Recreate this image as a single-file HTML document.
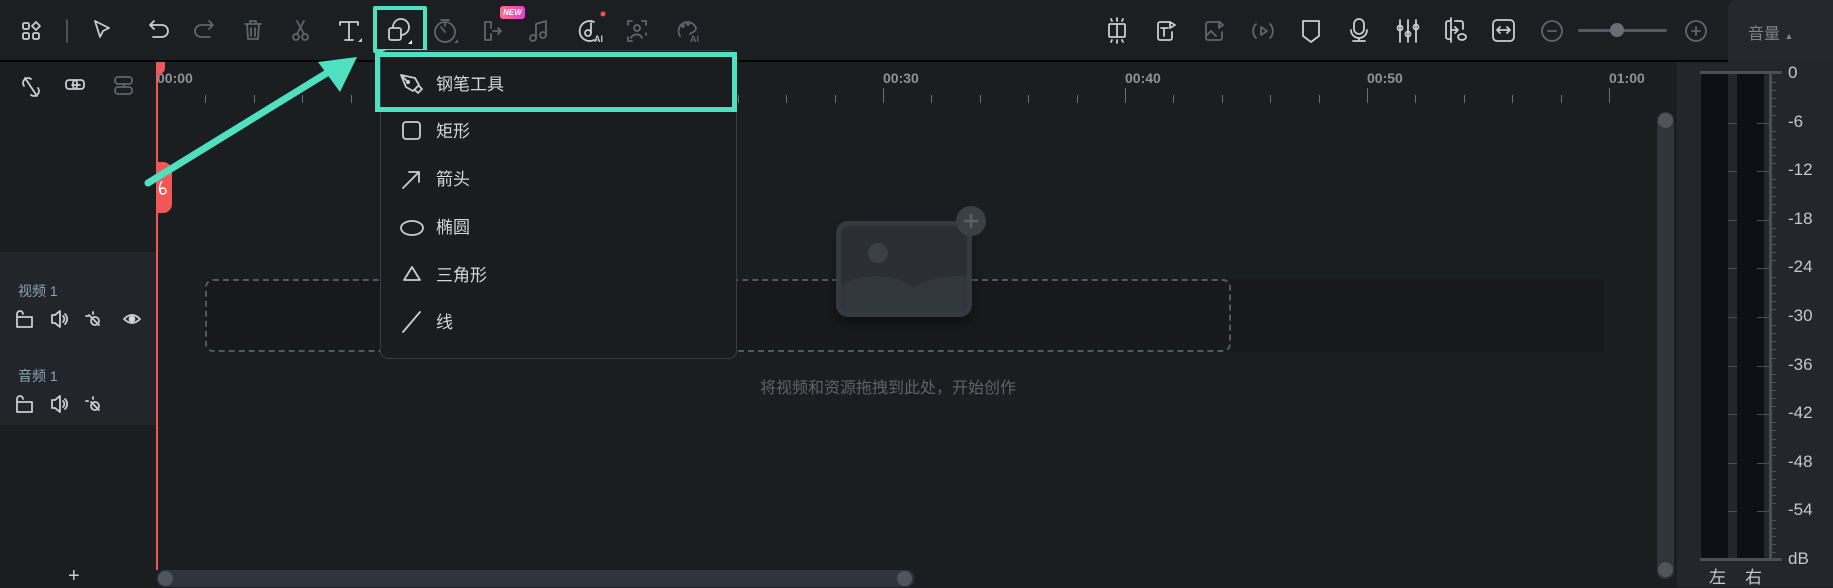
<!DOCTYPE html>
<html><head><meta charset="utf-8"><style>
*{margin:0;padding:0;box-sizing:border-box}
body{width:1833px;height:587px;background:#1b1e21;position:relative;overflow:hidden;font-family:"Liberation Sans","Noto Sans CJK SC",sans-serif}
.a{position:absolute}
svg.i{position:absolute;overflow:visible}
.ic{fill:none;stroke:#c9cdd1;stroke-width:1.8;stroke-linecap:round;stroke-linejoin:round}
.dim{stroke:#5f656b}
.lbl{position:absolute;color:#8d9298;font-size:14px;font-weight:bold}
.tk{position:absolute;background:#6a6f75;width:1px}
.mi{position:absolute;left:436px;color:#d3d7db;font-size:17px;line-height:20px}
.db{position:absolute;left:1788px;color:#c4c8cc;font-size:17px;line-height:18px}
</style></head><body>
<div class="a" style="left:0;top:0;width:1833px;height:60px;background:#1c1f22"></div>
<div class="a" style="left:0;top:60px;width:1728px;height:2px;background:#050505"></div>
<div class="a" style="left:1728px;top:0;width:105px;height:62px;background:#24282c;border-top-left-radius:8px"></div>
<div class="a" style="left:1748px;top:20px;color:#7e838a;font-size:16px">音量 <span style="font-size:9px">▲</span></div>

<svg class="i" width="1833" height="60" style="left:0;top:0">
 <g class="ic">
  <rect x="23" y="23" width="6" height="6" rx="1.5"/><rect x="33" y="33" width="6" height="6" rx="1.5"/><rect x="23" y="33" width="6" height="6" rx="1.5"/><path d="M36 22l4 4-4 4-4-4z"/>
  <path d="M67 20v22" stroke="#555"/>
  <path d="M95 21l5 16 3-6 6-3z"/>
  <path d="M150 25h12a6 6 0 010 12h-9M150 25l4-4M150 25l4 4"/>
 </g>
 <g class="ic dim">
  <path d="M213 25h-12a6 6 0 000 12h9M213 25l-4-4M213 25l-4 4"/>
  <path d="M245 24h16M250 24v-3h6v3M247 24l1 15h10l1-15M251 28v8M255 28v8"/>
  <circle cx="296" cy="37" r="3"/><circle cx="305" cy="37" r="3"/><path d="M297 34l7-13M304 34l-7-13"/>
 </g>
 <g class="ic"><path d="M340 22h18M349 22v18M345 40h8M340 22v3M358 22v3"/></g>
 <path d="M358 42l4-4v4z" fill="#c9cdd1"/>
 <g class="ic"><rect x="389" y="28" width="12" height="12" rx="2"/><path d="M401 35a8 8 0 10-8-8"/></g>
 <path d="M408 44l4-4v4z" fill="#fff"/>
 <g class="ic dim">
  <circle cx="445" cy="32" r="10"/><path d="M445 22v4M445 32l-4-5M441 20h8"/>
  <path d="M485 22v18M485 22h6v6M485 40h6v-6M493 31h8M498 28l3 3-3 3"/>
  <path d="M536 24l10-3v14M536 24v14"/><circle cx="533" cy="38" r="3"/><circle cx="543" cy="35" r="3"/>
 </g>
 <path d="M454 43l4-4v4z" fill="#5f656b"/>
 <g class="ic"><path d="M594 22a10 10 0 100 18"/><circle cx="588" cy="33" r="3"/><path d="M591 33v-10"/></g>
 <text x="594" y="42" fill="#c9cdd1" font-size="9" font-weight="bold" font-family="Liberation Sans">AI</text>
 <circle cx="603" cy="14" r="2.5" fill="#f24e4e"/>
 <g class="ic dim"><path d="M628 25v-4h4M642 21h4v4M628 37v4h4M646 33v2"/><circle cx="637" cy="28" r="3"/><path d="M631 38a6 6 0 0111 0"/>
  <path d="M680 36a9 9 0 1116-8c0 4-4 4-6 6"/><circle cx="683" cy="26" r="1"/><circle cx="688" cy="24" r="1"/></g>
 <text x="690" y="42" fill="#5f656b" font-size="9" font-weight="bold" font-family="Liberation Sans">AI</text>
 <g class="ic" stroke="#4fd9b8"><rect x="1109" y="24" width="16" height="13" rx="1"/><path d="M1117 24v13M1117 18v3M1117 40v3M1111 19l1 2M1123 19l-1 2M1111 42l1-2M1123 42l-1-2"/></g>
 <g class="ic"><path d="M1170 22h-10a2 2 0 00-2 2v14a2 2 0 002 2h10a2 2 0 002-2v-6M1161 28h7M1164 28v8M1170 22l5 3-5 3z"/></g>
 <g class="ic dim"><path d="M1220 22h-12a2 2 0 00-2 2v14a2 2 0 002 2h12a2 2 0 002-2v-6M1206 36l5-5 5 5"/><path d="M1219 22l4 3-4 3z"/>
  <path d="M1256 24a10 10 0 000 14M1270 38a10 10 0 000-14M1261 27l6 4-6 4z"/></g>
 <g class="ic"><path d="M1303 21h16v15l-8 6-8-6z"/>
  <rect x="1354" y="19" width="10" height="15" rx="5"/><path d="M1351 30a8 8 0 0016 0M1359 38v3M1353 41h12"/>
  <path d="M1400 20v22M1408 20v22M1416 20v22"/><circle cx="1400" cy="28" r="2.5"/><circle cx="1408" cy="34" r="2.5"/><circle cx="1416" cy="27" r="2.5"/>
  <path d="M1451 21h-3a2 2 0 00-2 2v14a2 2 0 002 2h3M1451 18v24M1455 21h6a2 2 0 012 2v6M1451 30h6M1455 27l3 3-3 3"/><ellipse cx="1462" cy="37" rx="4" ry="3"/>
  <rect x="1493" y="20" width="21" height="21" rx="4"/><path d="M1497 30h13M1497 30l3-3M1497 30l3 3M1510 30l-3-3M1510 30l-3 3"/></g>
 <g class="ic dim"><circle cx="1552" cy="31" r="10"/><path d="M1548 31h8"/><circle cx="1696" cy="31" r="10"/><path d="M1692 31h8M1696 27v8"/></g>
 <rect x="1578" y="29" width="89" height="3" rx="1.5" fill="#55595f"/>
 <circle cx="1617" cy="30" r="7" fill="#6a6f75"/>
</svg>
<div class="a" style="left:500px;top:6px;width:25px;height:13px;border-radius:3px;background:linear-gradient(90deg,#ff6d8a,#e23fd0);color:#fff;font-size:8px;font-weight:bold;font-style:italic;text-align:center;line-height:13px">NEW</div>
<div class="a" style="left:373px;top:6px;width:54px;height:47px;border:4px solid #4fe0c0;border-radius:2px"></div>

<svg class="i" width="157" height="30" style="left:0;top:70px">
 <g class="ic"><path d="M25 8l12 18M24 16a5 5 0 017-7M38 18a5 5 0 01-7 7"/>
 <rect x="66" y="10" width="11" height="9" rx="3"/><rect x="73" y="10" width="11" height="9" rx="3"/><path d="M72 15h8"/></g>
 <g class="ic dim"><rect x="115" y="7" width="17" height="7" rx="3"/><rect x="115" y="17" width="17" height="7" rx="3"/><path d="M124 14v3"/></g>
</svg>
<div class="a" style="left:0;top:252px;width:157px;height:105px;background:#222529"></div>
<div class="a" style="left:0;top:357px;width:157px;height:68px;background:#222529"></div>
<div class="a" style="left:18px;top:281px;color:#8ea3b8;font-size:14px">视频 1</div>
<div class="a" style="left:18px;top:366px;color:#8ea3b8;font-size:14px">音频 1</div>
<svg class="i" width="157" height="120" style="left:0;top:300px">
 <g class="ic" stroke-width="1.5" stroke="#e0e3e6">
  <path d="M17 19v-5a3 3 0 016 0M17 17h15v10H17z"/><path d="M52 15h3l5-4v16l-5-4h-3zM63 16a4 4 0 010 6M65 14a7 7 0 010 10"/>
  <path d="M91 17l8 8M89 15l2 2M93 12v2M86 16h2"/><circle cx="95" cy="21" r="4"/>
  <path d="M124 19q8-8 16 0q-8 8-16 0z"/><circle cx="132" cy="19" r="2.5" fill="#e0e3e6"/>
  <path d="M17 104v-5a3 3 0 016 0M17 102h15v10H17z"/><path d="M52 100h3l5-4v16l-5-4h-3zM63 101a4 4 0 010 6M65 99a7 7 0 010 10"/>
  <path d="M91 102l8 8M93 97v2M86 101h2"/><circle cx="95" cy="106" r="4"/>
 </g>
</svg>
<div class="a" style="left:68px;top:566px;color:#ccc;font-size:20px;line-height:20px">+</div>

<div class="lbl" style="left:157px;top:70px">00:00</div>
<div class="lbl" style="left:883px;top:70px">00:30</div>
<div class="lbl" style="left:1125px;top:70px">00:40</div>
<div class="lbl" style="left:1367px;top:70px">00:50</div>
<div class="lbl" style="left:1609px;top:70px">01:00</div>
<div id="ticks"></div>

<div class="a" style="left:204px;top:279px;width:1400px;height:73px;background:#17191c;border-radius:4px"></div>
<div class="a" style="left:205px;top:279px;width:1026px;height:73px;border:2px dashed #53585e;border-radius:8px"></div>
<div class="a" style="left:836px;top:221px;width:136px;height:96px;background:#2b2f34;border:5px solid #353a40;border-radius:12px;box-shadow:0 6px 10px rgba(0,0,0,.4);overflow:hidden">
 <div class="a" style="left:27px;top:17px;width:20px;height:20px;border-radius:50%;background:#3b4047"></div>
 <div class="a" style="left:-20px;top:50px;width:110px;height:80px;border-radius:50%;background:#32373d"></div>
 <div class="a" style="left:50px;top:50px;width:130px;height:90px;border-radius:50%;background:#32373d"></div>
</div>
<svg class="i" width="32" height="32" style="left:955px;top:205px"><circle cx="16" cy="16" r="15" fill="#3b4047"/><path d="M16 9v14M9 16h14" stroke="#5a6067" stroke-width="2.5"/></svg>
<div class="a" style="left:760px;top:374px;color:#5e6369;font-size:16px">将视频和资源拖拽到此处，开始创作</div>

<div class="a" style="left:157px;top:570px;width:757px;height:17px;background:#30353b;border-radius:8px"></div>
<div class="a" style="left:158px;top:571px;width:15px;height:15px;background:#4f555c;border-radius:50%"></div>
<div class="a" style="left:897px;top:571px;width:15px;height:15px;background:#4f555c;border-radius:50%"></div>
<div class="a" style="left:1657px;top:112px;width:17px;height:467px;background:#30353b;border-radius:8px"></div>
<div class="a" style="left:1658px;top:113px;width:15px;height:15px;background:#4f555c;border-radius:50%"></div>
<div class="a" style="left:1658px;top:562px;width:15px;height:15px;background:#4f555c;border-radius:50%"></div>

<div class="a" style="left:1677px;top:62px;width:156px;height:525px;background:#23272c"></div>
<div class="a" style="left:1701px;top:74px;width:27px;height:485px;background:#0d1116"></div>
<div class="a" style="left:1737px;top:74px;width:27px;height:485px;background:#0d1116"></div>
<div class="a" style="left:1700px;top:71px;width:82px;height:3px;background:#4a4f55"></div>
<div class="a" style="left:1700px;top:558px;width:82px;height:3px;background:#4a4f55"></div>
<div class="a" style="left:1769px;top:72px;width:3px;height:488px;background:#4a4f55"></div>
<div id="db"></div>
<div class="a" style="left:1709px;top:563px;color:#c4c8cc;font-size:17px">左</div>
<div class="a" style="left:1745px;top:563px;color:#c4c8cc;font-size:17px">右</div>

<div class="a" style="left:156px;top:62px;width:2px;height:508px;background:#f25757"></div>
<div class="a" style="left:156px;top:62px;width:9px;height:12px;background:#f25757;border-radius:0 0 6px 0"></div>
<div class="a" style="left:156px;top:162px;width:16px;height:51px;background:#f25757;border-radius:0 9px 9px 0"></div>
<svg class="i" width="20" height="30" style="left:156px;top:178px"><path d="M6 3c-4 6-3 13 1 13s4-6 0-6-3 3-2 4" fill="none" stroke="#fff" stroke-width="1.4"/></svg>

<div class="a" style="left:380px;top:50px;width:357px;height:309px;background:#1a1d20;border:1px solid #3a3f45;border-radius:8px"></div>
<div class="a" style="left:375px;top:52px;width:362px;height:60px;border:5px solid #4fe0c0"></div>
<svg class="i" width="40" height="260" style="left:396px;top:70px">
 <g class="ic" stroke="#c6cacf" stroke-width="1.6">
  <path d="M5 5l14 3 4 7-6 6-7-4zM5 5l7 7M19 20l3 3 4-4-3-3"/><circle cx="12" cy="12" r="1.2"/>
  <rect x="7" y="52" width="17" height="17" rx="3"/>
  <path d="M7 118l16-16M13 102h10v10"/>
  <ellipse cx="16" cy="158" rx="11" ry="7"/>
  <path d="M16 197l-8 13h16z"/>
  <path d="M7 262l17-20"/>
 </g>
</svg>
<div class="mi" style="top:75px">钢笔工具</div>
<div class="mi" style="top:122px">矩形</div>
<div class="mi" style="top:170px">箭头</div>
<div class="mi" style="top:218px">椭圆</div>
<div class="mi" style="top:266px">三角形</div>
<div class="mi" style="top:313px">线</div>

<svg class="i" width="1833" height="587" style="left:0;top:0">
 <path d="M148 183L335 68" stroke="#4fe0c0" stroke-width="7" stroke-linecap="round"/>
 <path d="M357 57L318 62L340 92z" fill="#4fe0c0"/>
</svg>

<script>
var t=document.getElementById('ticks'),h='';
for(var i=0;i<=30;i++){var x=157+i*48.4;var maj=i%5==0;if(x>1640)break;
h+='<div class="tk" style="left:'+Math.round(x)+'px;top:'+(maj?88:95)+'px;height:'+(maj?15:8)+'px"></div>';}
t.innerHTML=h;
var d=document.getElementById('db'),s='',L=['0','-6','-12','-18','-24','-30','-36','-42','-48','-54','dB'];
for(var k=0;k<11;k++){var y=74+k*48.6;s+='<div class="db" style="top:'+Math.round(y-10)+'px">'+L[k]+'</div>';
if(k>0&&k<10){s+='<div class="a" style="left:1757px;top:'+Math.round(y)+'px;width:14px;height:1px;background:#4a4f55"></div><div class="a" style="left:1728px;top:'+Math.round(y)+'px;width:9px;height:1px;background:#4a4f55"></div>';}
for(var m=1;m<6&&k<10;m++){s+='<div class="a" style="left:1772px;top:'+Math.round(y+m*8.1)+'px;width:4px;height:1px;background:#4a4f55"></div>';}}
d.innerHTML=s;
</script>
</body></html>
